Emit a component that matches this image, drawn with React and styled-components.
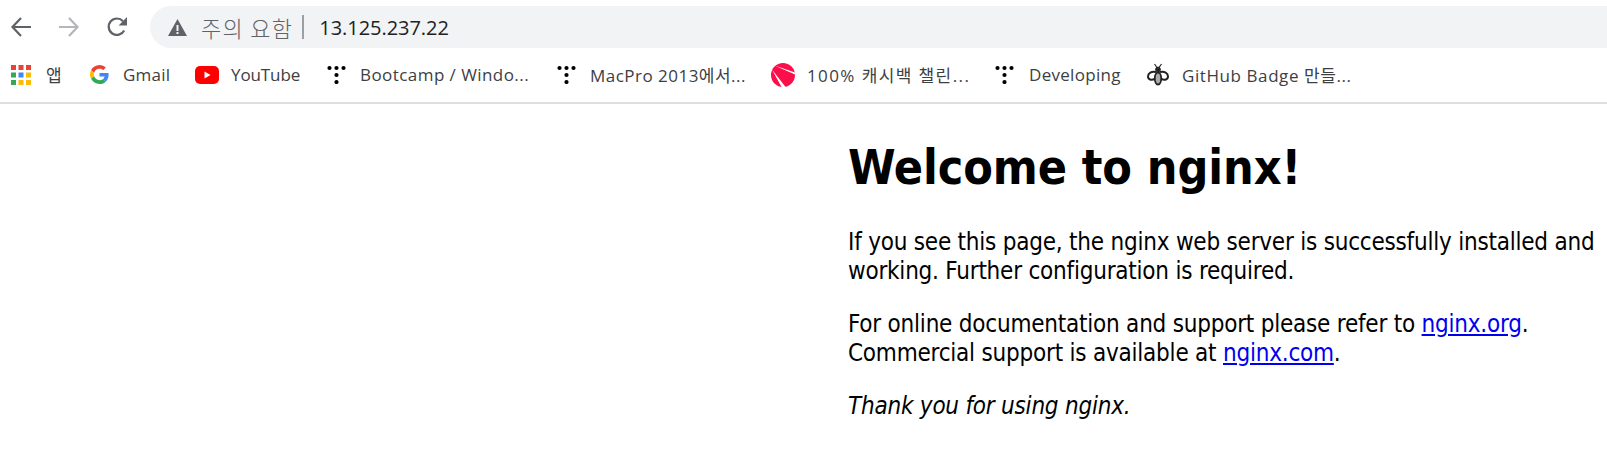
import React from "react";
import styled, { createGlobalStyle } from "styled-components";

const GlobalStyle = createGlobalStyle`
  html, body {
    margin: 0;
    padding: 0;
    background: #fff;
    overflow: hidden;
  }
`;

const Page = styled.div`
  width: 1607px;
  height: 458px;
  display: flex;
  flex-direction: column;
  overflow: hidden;
`;

const Toolbar = styled.div`
  height: 54px;
  display: flex;
  align-items: center;
  padding-left: 10px;
  box-sizing: border-box;
`;

const NavButton = styled.button`
  width: ${(p) => p.$width || 48}px;
  height: 40px;
  padding: 0;
  border: 0;
  background: none;
  display: flex;
  align-items: center;
  justify-content: flex-start;
  color: ${(p) => (p.$disabled ? "#b4b6b9" : "#5f6368")};
`;

const AddressBar = styled.div`
  flex: 1;
  height: 42px;
  padding-left: 18px;
  display: flex;
  align-items: center;
  background: #f1f3f4;
  border-radius: 21px 0 0 21px;
  font-family: "Open Sans", "Noto Sans CJK KR", sans-serif;
`;

const WarningLabel = styled.span`
  margin-left: 14px;
  font-family: "Noto Sans CJK KR", sans-serif;
  font-size: 22px;
  font-weight: 300;
  letter-spacing: 1.3px;
  color: #5f6368;
`;

const Divider = styled.span`
  width: 2px;
  height: 24px;
  margin: 0 15px 0 9px;
  background: #9aa0a6;
`;

const Host = styled.span`
  font-size: 20px;
  letter-spacing: -0.05px;
  color: #202124;
`;

const BookmarksBar = styled.div`
  height: 50px;
  display: flex;
  align-items: center;
  padding: 0 0 7px 11px;
  box-sizing: border-box;
  border-bottom: 2px solid #dedfe0;
`;

const Bookmark = styled.div`
  width: ${(p) => p.$width}px;
  flex: none;
  display: flex;
  align-items: center;
  gap: ${(p) => p.$gap}px;
`;

const BookmarkIcon = styled.span`
  flex: none;
  display: flex;
  align-items: center;
  justify-content: center;
`;

const BookmarkLabel = styled.span`
  font-family: "Open Sans", "Noto Sans CJK KR", sans-serif;
  font-size: 17px;
  letter-spacing: ${(p) => p.$spacing || 0}px;
  white-space: nowrap;
  color: #3c4043;
`;

const Content = styled.main`
  margin-left: 848px;
  width: 759px;
  padding-top: 34px;
  font-family: "DejaVu Sans Condensed", "DejaVu Sans", sans-serif;
  font-stretch: condensed;
  font-size: 24px;
  line-height: 29px;
  letter-spacing: -0.22px;
  color: #000;
`;

const Title = styled.h1`
  margin: 0 0 32px;
  font-size: 48px;
  line-height: 58px;
  font-weight: 700;
  letter-spacing: -0.1px;
`;

const Para = styled.p`
  margin: 0 0 24px;
  white-space: nowrap;
`;

const Link = styled.a`
  color: #0000ee;
  text-decoration: underline;
`;

const BackIcon = () => (
  <svg width="22" height="22" viewBox="0 0 22 22" fill="none" stroke="currentColor" strokeWidth="2.2">
    <path d="M21 11H2.5M11 2L2.5 11l8.5 9" />
  </svg>
);

const ForwardIcon = () => (
  <svg width="22" height="22" viewBox="0 0 22 22" fill="none" stroke="currentColor" strokeWidth="2.2">
    <path d="M1 11h18.5M11 2l8.5 9-8.500 9" />
  </svg>
);

const ReloadIcon = () => (
  <svg width="22" height="22" viewBox="0 0 22 22" fill="none">
    <path d="M18.2 14.5A8.2 8.2 0 1 1 17 5.2" stroke="currentColor" strokeWidth="2.2" />
    <path d="M21 1v8.4h-8.4z" fill="currentColor" />
  </svg>
);

const WarningIcon = () => (
  <svg width="19" height="17" viewBox="0 0 19 17">
    <path fillRule="evenodd" fill="#5f6368" d="M9.5 0L19 17H0zM8.5 6v6h2V6zM8.5 13v2h2v-2z" />
  </svg>
);

const AppsIcon = () => {
  const colors = ["#ea4335", "#ea4335", "#ea4335", "#34a853", "#4285f4", "#fbbc04", "#34a853", "#fbbc04", "#fbbc04"];
  return (
    <svg width="20" height="20" viewBox="0 0 20 20">
      {colors.map((c, i) => (
        <rect key={i} x={(i % 3) * 7.5} y={Math.floor(i / 3) * 7.5} width="5" height="5" fill={c} />
      ))}
    </svg>
  );
};

const GoogleIcon = () => (
  <svg width="19" height="19" viewBox="0 0 48 48">
    <path fill="#ea4335" d="M24 9.5c3.5 0 6.700 1.300 9.100 3.500l6.800-6.800C35.800 2.400 30.300 0 24 0 14.600 0 6.500 5.400 2.600 13.200l7.900 6.100C12.400 13.600 17.700 9.500 24 9.500z" />
    <path fill="#4285f4" d="M47 24.500c0-1.600-.1-3.100-.4-4.500H24v9h12.900c-.6 3-2.200 5.500-4.800 7.200l7.700 6C44.300 37.500 47 31.600 47 24.500z" />
    <path fill="#fbbc05" d="M10.500 28.700c-.5-1.400-.8-3-.8-4.700s.3-3.300.8-4.700l-7.900-6.100C1 16.400 0 20.100 0 24s1 7.600 2.600 10.800z" />
    <path fill="#34a853" d="M24 48c6.500 0 11.900-2.100 15.800-5.800l-7.700-6c-2.100 1.400-4.900 2.300-8.100 2.300-6.300 0-11.600-4.200-13.500-9.800l-7.900 6.100C6.500 42.600 14.600 48 24 48z" />
  </svg>
);

const YouTubeIcon = () => (
  <svg width="24" height="18" viewBox="0 0 24 18">
    <rect width="24" height="18" rx="5" fill="#ff0000" />
    <path d="M9.500 5.500v7l6-3.500z" fill="#fff" />
  </svg>
);

const DotsIcon = () => (
  <svg width="19" height="19" viewBox="0 0 19 19" fill="#000">
    <circle cx="2.500" cy="3" r="2.100" />
    <circle cx="9.500" cy="3" r="2.100" />
    <circle cx="16.500" cy="3" r="2.100" />
    <circle cx="9.500" cy="10" r="2.100" />
    <circle cx="9.500" cy="17" r="2.100" />
  </svg>
);

const RedCircleIcon = () => (
  <svg width="24" height="24" viewBox="0 0 24 24">
    <circle cx="12" cy="12" r="12" fill="#fb0f4b" />
    <path d="M3.500 2.500L24 9.500V11.500z" fill="#fff" />
    <path d="M1 6.500L14.500 24H10.500z" fill="#fff" />
  </svg>
);

const BeeIcon = () => (
  <svg width="22" height="24" viewBox="0 0 22 24" fill="none" stroke="#222">
    <path d="M7.500 1l2.500 3.500M14.500 1L12 4.500" strokeWidth="1.200" />
    <circle cx="11" cy="6.500" r="2.400" fill="#222" />
    <path d="M9 9C4.500 8 1 10 1 13.500c0 3 3.500 4 6.500 2.500M13 9c4.500-1 8 1 8 4.500 0 3-3.500 4-6.500 2.500" strokeWidth="2" />
    <ellipse cx="11" cy="15.500" rx="3.200" ry="6" fill="#aaa" strokeWidth="1.800" />
  </svg>
);

const bookmarks = [
  { icon: <AppsIcon />, label: "앱", width: 79, gap: 15 },
  { icon: <GoogleIcon />, label: "Gmail", width: 105, gap: 14, spacing: 0.2 },
  { icon: <YouTubeIcon />, label: "YouTube", width: 132, gap: 12, spacing: -0.1 },
  { icon: <DotsIcon />, label: "Bootcamp / Windo...", width: 230, gap: 14, spacing: 0.44 },
  { icon: <DotsIcon />, label: "MacPro 2013에서...", width: 214, gap: 14, spacing: 0.48 },
  { icon: <RedCircleIcon />, label: "100% 캐시백 챌린...", width: 224, gap: 12, spacing: 1.4 },
  { icon: <DotsIcon />, label: "Developing", width: 152, gap: 15, spacing: 0.3 },
  { icon: <BeeIcon />, label: "GitHub Badge 만들...", width: 210, gap: 13, spacing: 0.58 },
];

export default function App() {
  return (
    <Page>
      <GlobalStyle />
      <Toolbar>
        <NavButton>
          <BackIcon />
        </NavButton>
        <NavButton $disabled>
          <ForwardIcon />
        </NavButton>
        <NavButton $width={44}>
          <ReloadIcon />
        </NavButton>
        <AddressBar>
          <WarningIcon />
          <WarningLabel>주의 요함</WarningLabel>
          <Divider />
          <Host>13.125.237.22</Host>
        </AddressBar>
      </Toolbar>
      <BookmarksBar>
        {bookmarks.map((b) => (
          <Bookmark key={b.label} $width={b.width} $gap={b.gap}>
            <BookmarkIcon>{b.icon}</BookmarkIcon>
            <BookmarkLabel $spacing={b.spacing}>{b.label}</BookmarkLabel>
          </Bookmark>
        ))}
      </BookmarksBar>
      <Content>
        <Title>Welcome to nginx!</Title>
        <Para>
          If you see this page, the nginx web server is successfully installed and
          <br />
          working. Further configuration is required.
        </Para>
        <Para>
          For online documentation and support please refer to <Link href="#">nginx.org</Link>.
          <br />
          Commercial support is available at <Link href="#">nginx.com</Link>.
        </Para>
        <Para>
          <em>Thank you for using nginx.</em>
        </Para>
      </Content>
    </Page>
  );
}
